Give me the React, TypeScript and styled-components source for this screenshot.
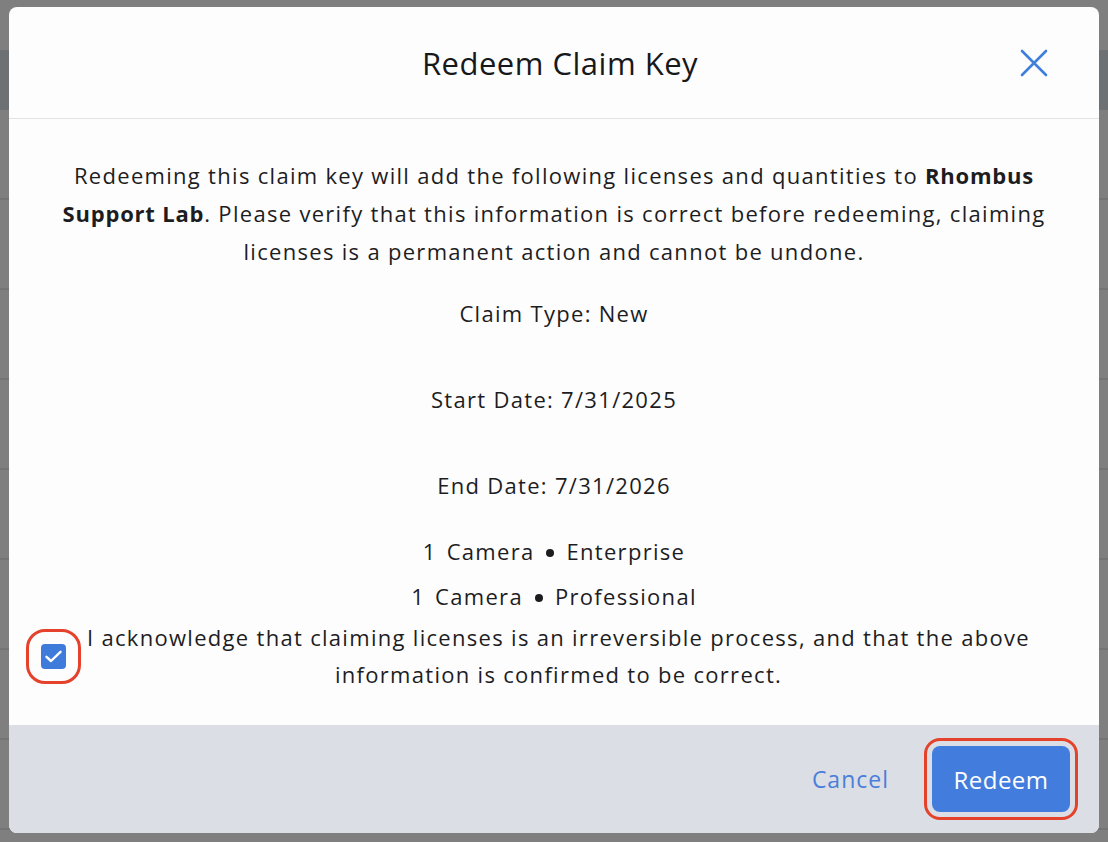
import React from 'react';
import styled, { createGlobalStyle } from 'styled-components';

const GlobalStyle = createGlobalStyle`
  html, body {
    margin: 0;
    padding: 0;
    width: 100%;
    height: 100%;
  }
  body {
    font-family: 'Open Sans', 'Noto Sans', sans-serif;
    color: #1d1d1f;
    overflow: hidden;
  }
`;

/* ***** page under the dimmed backdrop */
const Page = styled.div`
  position: relative;
  width: 1108px;
  height: 842px;
  background-color: #7f7f7f;
  overflow: hidden;
`;

const PageHeader = styled.div`
  height: 60px;
  margin-top: 50px;
  background-color: #6e7173;
`;

const PageRow = styled.div`
  height: 88px;
  border-bottom: 2px solid #747474;
`;

const Overlay = styled.div`
  position: absolute;
  inset: 0;
  padding: 7px 9px 9px;
  display: flex;
`;

/* ***** modal */
const Modal = styled.div`
  flex: 1;
  display: flex;
  flex-direction: column;
  background-color: #fdfdfe;
  border-radius: 8px;
  overflow: hidden;
`;

const Header = styled.header`
  display: grid;
  grid-template-columns: 1fr auto 1fr;
  align-items: center;
  height: 111px;
  padding: 0 51px 0 63px;
  border-bottom: 1px solid #e1e2e5;
`;

const Title = styled.h2`
  grid-column: 2;
  margin: 0;
  font-size: 31px;
  font-weight: 400;
  letter-spacing: 0.5px;
  color: #17181a;
`;

const CloseButton = styled.button`
  grid-column: 3;
  justify-self: end;
  display: flex;
  padding: 0;
  border: none;
  background: none;
  cursor: pointer;
`;

const Body = styled.div`
  flex: 1;
  display: flex;
  flex-direction: column;
  align-items: center;
  padding: 37px 48px 0;
  font-size: 22px;
  letter-spacing: 1.3px;
  line-height: 38px;
  text-align: center;
`;

const Intro = styled.p`
  margin: 0 0 24px;
  b {
    font-weight: 700;
    letter-spacing: 0.8px;
  }
`;

interface IDetailProps {
  gap: number;
}

const Detail = styled.p<IDetailProps>`
  margin: 0 0 ${({ gap }) => gap}px;
`;

const LicenseList = styled.ul`
  margin: 0;
  padding: 0;
  list-style: none;
`;

const License = styled.li`
  display: flex;
  justify-content: center;
  align-items: center;
  gap: 10px;
  line-height: 45px;
`;

const Dot = styled.span`
  width: 8px;
  height: 8px;
  margin: 2px 2px 0;
  border-radius: 50%;
  background-color: #1d1d1f;
`;

const AckRow = styled.label`
  align-self: stretch;
  display: flex;
  align-items: center;
  margin: 0 0 0 -16px;
`;

const CheckBox = styled.span`
  flex-shrink: 0;
  display: flex;
  align-items: center;
  justify-content: center;
  width: 25px;
  height: 25px;
  border-radius: 4px;
  background-color: #3f7bdb;
  /* highlight ring */
  outline: 3px solid #e5422b;
  outline-offset: 12px;
`;

const AckText = styled.span`
  flex: 1;
  line-height: 37px;
`;

const Footer = styled.footer`
  display: flex;
  align-items: center;
  justify-content: flex-end;
  gap: 43px;
  height: 108px;
  padding: 0 29px 0 0;
  background-color: #dcdee5;
`;

const CancelButton = styled.button`
  padding: 0;
  border: none;
  background: none;
  font-family: inherit;
  font-size: 23px;
  letter-spacing: 1px;
  color: #4a7fd9;
  cursor: pointer;
`;

const RedeemButton = styled.button`
  width: 138px;
  height: 66px;
  border: none;
  border-radius: 8px;
  background-color: #427ddd;
  font-family: inherit;
  font-size: 24px;
  letter-spacing: 0.5px;
  color: #fff;
  cursor: pointer;
  /* highlight ring */
  outline: 3px solid #e5422b;
  outline-offset: 5px;
`;

const CloseIcon = () => (
  <svg width="28" height="28" viewBox="0 0 28 28" fill="none">
    <path d="M2 2L26 26M26 2L2 26" stroke="#3f7fdc" strokeWidth="2.6" strokeLinecap="round" />
  </svg>
);

const CheckIcon = () => (
  <svg width="17" height="13" viewBox="0 0 17 13" fill="none">
    <path d="M1.5 6.8L6 11L15.5 1.8" stroke="#fff" strokeWidth="2.4" strokeLinecap="round" strokeLinejoin="round" />
  </svg>
);

const licenses = [
  { qty: 1, kind: 'Camera', tier: 'Enterprise' },
  { qty: 1, kind: 'Camera', tier: 'Professional' },
];

export default function App() {
  return (
    <>
      <GlobalStyle />
      <Page>
        <PageHeader />
        {Array.from({ length: 8 }).map((_, i) => (
          <PageRow key={i} />
        ))}
        <Overlay>
          <Modal>
            <Header>
              <Title>Redeem Claim Key</Title>
              <CloseButton aria-label="Close">
                <CloseIcon />
              </CloseButton>
            </Header>
            <Body>
              <Intro>
                Redeeming this claim key will add the following licenses and quantities to{' '}
                <b>Rhombus Support Lab</b>. Please verify that this information is correct before
                redeeming, claiming licenses is a permanent action and cannot be undone.
              </Intro>
              <Detail gap={48}>Claim Type: New</Detail>
              <Detail gap={48}>Start Date: 7/31/2025</Detail>
              <Detail gap={25}>End Date: 7/31/2026</Detail>
              <LicenseList>
                {licenses.map((l) => (
                  <License key={l.tier}>
                    <span>{l.qty}</span>
                    <span>{l.kind}</span>
                    <Dot />
                    <span>{l.tier}</span>
                  </License>
                ))}
              </LicenseList>
              <AckRow>
                <CheckBox>
                  <CheckIcon />
                </CheckBox>
                <AckText>
                  I acknowledge that claiming licenses is an irreversible process, and that the above
                  information is confirmed to be correct.
                </AckText>
              </AckRow>
            </Body>
            <Footer>
              <CancelButton>Cancel</CancelButton>
              <RedeemButton>Redeem</RedeemButton>
            </Footer>
          </Modal>
        </Overlay>
      </Page>
    </>
  );
}
